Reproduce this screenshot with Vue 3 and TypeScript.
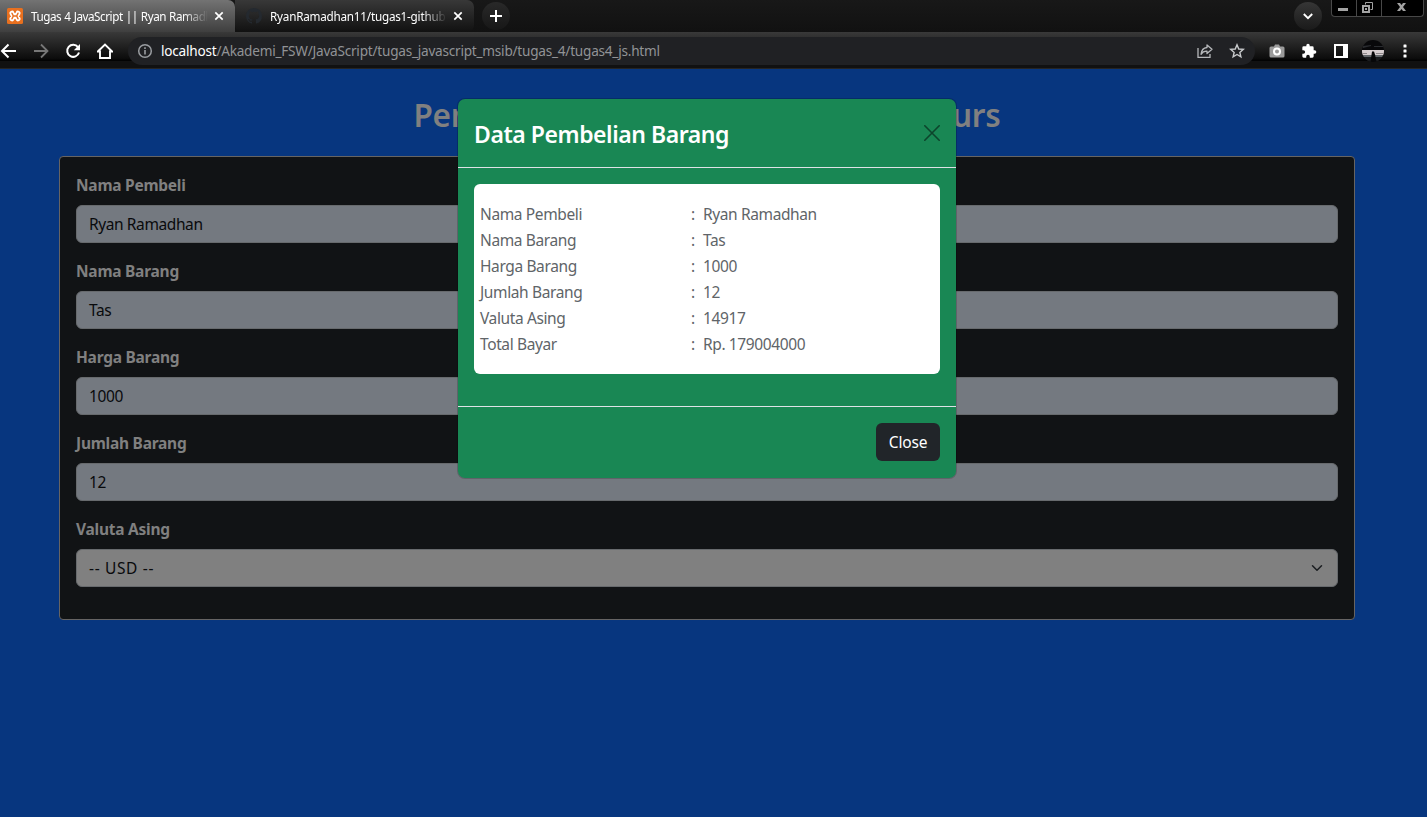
<script setup lang="ts">
interface Row { label: string; value: string }

const fields: Row[] = [
  { label: 'Nama Pembeli', value: 'Ryan Ramadhan' },
  { label: 'Nama Barang', value: 'Tas' },
  { label: 'Harga Barang', value: '1000' },
  { label: 'Jumlah Barang', value: '12' },
]

const summary: Row[] = [
  ...fields,
  { label: 'Valuta Asing', value: '14917' },
  { label: 'Total Bayar', value: 'Rp. 179004000' },
]
</script>

<template>
  <div class="window">
    <header class="chrome">
      <div class="tabs">
        <div class="tab active">
          <svg class="favicon" width="16" height="16" viewBox="0 0 16 16">
            <rect width="16" height="16" rx="1.500" fill="#e8701f" />
            <path d="M5 5.200L6.500 8 5 10.800M11 5.200L9.500 8l1.500 2.800M6.500 8h3" fill="none" stroke="#fff" stroke-width="5" stroke-linecap="round" stroke-linejoin="round" />
            <path d="M5 5.200L6.300 8 5 10.800M11 5.200L9.700 8l1.300 2.800M6.300 8h3.400" fill="none" stroke="#e8701f" stroke-width="1.500" stroke-linecap="round" stroke-linejoin="round" />
            <path d="M7 2h2v1.800L8 5 7 3.800zM7 14h2v-1.800L8 11l-1 1.200z" fill="#e8701f" />
          </svg>
          <span class="tab-title first">Tugas 4 JavaScript || Ryan Ramadhan</span>
          <svg class="tab-x" width="10" height="10" viewBox="0 0 10 10"><path d="M1.300 1.300l7.400 7.400M8.700 1.300L1.300 8.700" stroke="#fff" stroke-width="1.700" /></svg>
        </div>
        <div class="tab idle">
          <svg class="favicon" width="16" height="16" viewBox="0 0 16 16" fill="#24292f">
            <path d="M8 0C3.580 0 0 3.580 0 8c0 3.540 2.290 6.530 5.470 7.590.4.070.550-.170.550-.380 0-.190-.010-.820-.010-1.490-2.010.370-2.530-.490-2.690-.940-.090-.230-.480-.940-.820-1.130-.280-.150-.680-.520-.010-.530.630-.010 1.080.580 1.230.820.720 1.210 1.870.870 2.330.660.070-.520.280-.870.510-1.070-1.780-.2-3.640-.890-3.640-3.950 0-.870.310-1.590.820-2.150-.080-.2-.360-1.020.080-2.120 0 0 .670-.210 2.200.820a7.600 7.600 0 0 1 4 0c1.530-1.040 2.200-.820 2.200-.820.440 1.100.160 1.920.080 2.120.510.560.820 1.270.820 2.150 0 3.070-1.870 3.750-3.650 3.950.290.250.540.730.540 1.480 0 1.070-.010 1.930-.010 2.200 0 .210.150.460.550.380A8 8 0 0 0 16 8c0-4.420-3.580-8-8-8z" />
          </svg>
          <span class="tab-title second">RyanRamadhan11/tugas1-github</span>
          <svg class="tab-x" width="10" height="10" viewBox="0 0 10 10"><path d="M1.300 1.300l7.400 7.400M8.700 1.300L1.300 8.700" stroke="#fff" stroke-width="1.700" /></svg>
        </div>
        <div class="round plus">
          <svg width="12" height="12" viewBox="0 0 12 12"><path d="M6 0v12M0 6h12" stroke="#fff" stroke-width="2" /></svg>
        </div>
        <div class="spacer"></div>
        <div class="round search">
          <svg width="10" height="7" viewBox="0 0 10 7"><path d="M.8 1l4.200 4.200L9.200 1" fill="none" stroke="#fff" stroke-width="1.900" /></svg>
        </div>
        <div class="controls">
          <span class="control minimize"><svg width="10" height="3"><rect width="10" height="3" fill="#a3a3a3" /></svg></span>
          <span class="control restore">
            <svg width="11" height="11" viewBox="0 0 11 11"><path d="M3.500 2.500v-2h7v7h-2" fill="none" stroke="#a3a3a3" /><path d="M1 4h6v6H1z" fill="none" stroke="#a3a3a3" stroke-width="2" /><path d="M3 6h2v2H3z" fill="#a3a3a3" /></svg>
          </span>
          <span class="control quit"><svg width="9" height="8" viewBox="0 0 9 8"><path d="M0 0h3l1.500 2L6 0h3L6 4l3 4H6L4.500 6 3 8H0l3-4z" fill="#a3a3a3" /></svg></span>
        </div>
      </div>

      <div class="toolbar">
        <svg class="nav back" width="16" height="16" viewBox="0 0 16 16"><path d="M16 8H2.500M8.500 1.500L2 8l6.500 6.500" fill="none" stroke="#fff" stroke-width="2" /></svg>
        <svg class="nav" width="16" height="16" viewBox="0 0 16 16"><path d="M1 8h13M8 1.500L14.500 8 8 14.500" fill="none" stroke="#777" stroke-width="1.800" /></svg>
        <svg class="nav" width="16" height="16" viewBox="0 0 16 16"><path d="M13 4.200A6 6 0 1 0 14 9.500" fill="none" stroke="#fff" stroke-width="2" /><path d="M15 1v6.200H8.800z" fill="#fff" /></svg>
        <svg class="nav" width="16" height="16" viewBox="0 0 16 16"><path d="M.8 8.500L8 1.500l7.200 7H13V15H3V8.500z" fill="none" stroke="#fff" stroke-width="1.900" /></svg>
        <div class="address">
          <svg width="16" height="16" viewBox="0 0 16 16"><circle cx="8" cy="8" r="6.300" fill="none" stroke="#9a9da1" stroke-width="1.500" /><path d="M8 7v4.500M8 4.300v1.700" stroke="#9a9da1" stroke-width="1.600" /></svg>
          <span class="url"><b>localhost</b>/Akademi_FSW/JavaScript/tugas_javascript_msib/tugas_4/tugas4_js.html</span>
          <svg class="share" width="16" height="16" viewBox="0 0 16 16"><path d="M1 5v9.300h12V11" fill="none" stroke="#b6b8bb" stroke-width="1.300" /><path d="M10 2l5 4.300-5 4.300V8.200C7.500 8 5.500 9 4 11.300 4.500 7 6.800 4.800 10 4.500z" fill="none" stroke="#b6b8bb" stroke-width="1.300" stroke-linejoin="round" /></svg>
          <svg width="16" height="16" viewBox="0 0 16 16"><path d="M8 1.800l1.750 4.200 4.550.38-3.450 3 1.030 4.450L8 11.450l-3.880 2.380 1.030-4.450-3.450-3L6.250 6z" fill="none" stroke="#c8cacc" stroke-width="1.400" /></svg>
        </div>
        <svg class="camera" width="16" height="14" viewBox="0 0 16 14"><path d="M2 2.500h3L6 .5h4l1 2h3a1.500 1.500 0 0 1 1.500 1.500v8A1.500 1.500 0 0 1 14 13.500H2A1.500 1.500 0 0 1 .5 12V4A1.500 1.500 0 0 1 2 2.500z" fill="#9b9b9b" /><circle cx="8" cy="7.500" r="3" fill="#9b9b9b" stroke="#fff" stroke-width="2" /></svg>
        <svg class="puzzle" width="16" height="16" viewBox="0 0 24 24"><path d="M20.500 11H19V7a2 2 0 0 0-2-2h-4V3.500a2.500 2.500 0 0 0-5 0V5H4a2 2 0 0 0-2 2v3.800h1.500a2.700 2.700 0 0 1 0 5.400H2V20a2 2 0 0 0 2 2h3.800v-1.500a2.700 2.700 0 0 1 5.400 0V22H17a2 2 0 0 0 2-2v-4h1.500a2.500 2.500 0 0 0 0-5z" fill="#fff" /></svg>
        <svg class="panel" width="14" height="14" viewBox="0 0 14 14"><path d="M0 0h14v14H0zM2 2v10h7V2z" fill="#fff" fill-rule="evenodd" /></svg>
        <svg class="avatar" width="22" height="22" viewBox="0 0 22 22">
          <defs><clipPath id="portrait"><circle cx="11" cy="11" r="11" /></clipPath></defs>
          <g clip-path="url(#portrait)"><rect width="22" height="22" fill="#08080a" /><path d="M1 6l8-1v1L1 8zM12 6h9v1h-9z" fill="#2a2c30" /><path d="M0 10h22v5H0z" fill="#d8cfd0" /><path d="M0 13h5v1H0zM14 13h8v1h-8z" fill="#8f898b" /><path d="M0 15h22v2H0z" fill="#63676a" /><path d="M0 17h22v5H0z" fill="#1b1d1f" /><path d="M10 11.500h2l1 3 1.500 7.500H8.500l1-7z" fill="#070708" /></g>
        </svg>
        <svg class="more" width="4" height="14" viewBox="0 0 4 14" fill="#fff"><rect x=".5" y="0.500" width="3" height="3" rx=".5" /><rect x=".5" y="5.500" width="3" height="3" rx=".5" /><rect x=".5" y="10.500" width="3" height="3" rx=".5" /></svg>
      </div>
    </header>

    <main class="page">
      <h1>Penghitungan Pembelian Barang Kurs</h1>
      <section class="form">
        <div v-for="field in fields" :key="field.label" class="field">
          <div class="label">{{ field.label }}</div>
          <div class="input">{{ field.value }}</div>
        </div>
        <div class="field">
          <div class="label">Valuta Asing</div>
          <div class="input select">
            <span>-- USD --</span>
            <svg width="16" height="16" viewBox="0 0 16 16"><path d="m2 5 6 6 6-6" fill="none" stroke="#1a1d20" stroke-width="2" stroke-linecap="round" stroke-linejoin="round" /></svg>
          </div>
        </div>
      </section>
    </main>

    <div class="modal">
      <div class="modal-head">
        <h2>Data Pembelian Barang</h2>
        <svg width="16" height="16" viewBox="0 0 16 16"><path d="M.8.8l14.400 14.400M15.200.8L.8 15.200" stroke="#0d442c" stroke-width="1.600" stroke-linecap="round" /></svg>
      </div>
      <div class="modal-body">
        <div class="summary">
          <div v-for="row in summary" :key="row.label" class="row">
            <span>{{ row.label }}</span><span>:</span><span>{{ row.value }}</span>
          </div>
        </div>
      </div>
      <div class="modal-foot"><button type="button">Close</button></div>
    </div>
  </div>
</template>

<style>
body { margin: 0; overflow: hidden; }
</style>

<style scoped>
* { box-sizing: border-box; }
.window { position: relative; width: 1427px; height: 817px; overflow: hidden; display: flex; flex-direction: column; background: #07367f; font-family: "Noto Sans", sans-serif; font-size: 15.5px; line-height: 24px; }
svg { display: block; flex: none; }

.chrome { height: 69px; flex: none; display: flex; flex-direction: column; background: #151515; border-bottom: 1px solid #252525; }
.tabs { height: 32px; display: flex; align-items: flex-start; background: linear-gradient(#181818, #111); }
.tab { height: 32px; display: flex; align-items: center; font-size: 11.7px; line-height: 16px; color: #fff; }
.active { width: 235px; padding-left: 7px; background: linear-gradient(#737373, #3f3f3f); border-radius: 0 7px 0 0; }
.idle { width: 239px; padding-left: 11px; background: linear-gradient(#383838, #111); border-radius: 0 7px 7px 7px; }
.favicon { margin-right: 8px; }
.tab-title { width: 177px; overflow: hidden; white-space: nowrap; -webkit-mask-image: linear-gradient(90deg, #000 152px, transparent 177px); mask-image: linear-gradient(90deg, #000 152px, transparent 177px); }
.first { letter-spacing: -0.45px; word-spacing: 0.5px; }
.second { letter-spacing: -0.22px; }
.tab-x { margin-left: 6px; }
.round { width: 28px; height: 28px; margin-top: 2px; border-radius: 50%; display: flex; align-items: center; justify-content: center; background: linear-gradient(#363636, #1a1a1a); }
.plus { margin-left: 8px; background: linear-gradient(#292929, #171717); }
.spacer { flex: 1; }
.controls { width: 93px; height: 17px; margin: 0 3px 0 9px; display: flex; background: #000; border: 1px solid #484848; border-top: 0; border-radius: 0 0 4px 4px; }
.control { display: flex; justify-content: center; border-right: 1px solid #484848; }
.minimize { width: 25px; padding: 8px 2px 0 0; }
.restore { width: 25px; padding: 2px 3px 0 0; }
.quit { flex: 1; padding: 3px 2px 0 0; border-right: 0; }

.toolbar { height: 36px; display: flex; align-items: center; padding-top: 2px; background: linear-gradient(#393939, #0b0b0b 27px, #030303 28px, #030303 29px, #111 29px); }
.nav { margin-right: 16px; }
.back { margin-left: 0; margin-right: 17px; }
.nav:nth-child(4) { margin-right: 15px; }
.address { width: 1127px; height: 28px; display: flex; align-items: center; padding: 0 10px 0 9px; border-radius: 14px; background: #202124; }
.url { flex: 1; margin-left: 8px; font-size: 13.6px; line-height: 20px; letter-spacing: -0.23px; color: #919396; white-space: nowrap; }
.url b { color: #fff; font-weight: 400; }
.share { margin-right: 16px; }
.camera { margin-left: 14px; }
.puzzle { margin-left: 16px; }
.panel { margin-left: 17px; }
.avatar { margin-left: 14px; }
.more { margin-left: 19px; }

.page { padding: 26px 72px 0 59px; }
h1 { margin: 0 0 22px; font-size: 31.5px; line-height: 39px; font-weight: 600; letter-spacing: -0.3px; word-spacing: 4px; text-align: center; white-space: nowrap; color: #808080; }
.form { height: 464px; padding: 16px; background: #111315; border: 1px solid #666463; border-radius: 4px; }
.field { margin-bottom: 16px; }
.label { height: 24px; margin-bottom: 8px; font-weight: 700; letter-spacing: -0.25px; color: #808080; }
.input { height: 38px; padding: 6px 12px; border: 1px solid #676a6d; border-radius: 6px; background: #747980; color: #090a0c; letter-spacing: -0.4px; }
.select { display: flex; justify-content: space-between; align-items: center; background: #808080; letter-spacing: 0.65px; }
.select svg { width: 12px; height: 12px; margin: 0 2px 0 0; }

.modal { position: absolute; left: 457px; top: 98px; width: 500px; height: 381px; background: #198754; background-clip: padding-box; border: 1px solid rgba(0, 0, 0, 0.175); border-radius: 8px; letter-spacing: -0.38px; }
.modal-head { height: 69px; padding: 0 16px; display: flex; align-items: center; justify-content: space-between; border-bottom: 1px solid #dee2e6; }
h2 { margin: 2px 0 0; font-size: 23px; line-height: 36px; font-weight: 600; letter-spacing: -0.45px; color: #fff; }
.modal-body { height: 238px; padding: 16px; }
.summary { height: 190px; padding: 17px 6px; border-radius: 6px; background: #fff; color: #606468; }
.row { height: 26px; display: grid; grid-template-columns: 211px 12px 1fr; align-items: center; }
.modal-foot { height: 72px; padding: 16px; display: flex; justify-content: flex-end; border-top: 1px solid #dee2e6; }
button { width: 64px; height: 38px; padding: 0; border: 0; border-radius: 6px; background: #212529; color: #fff; font: inherit; letter-spacing: -0.2px; }
</style>
